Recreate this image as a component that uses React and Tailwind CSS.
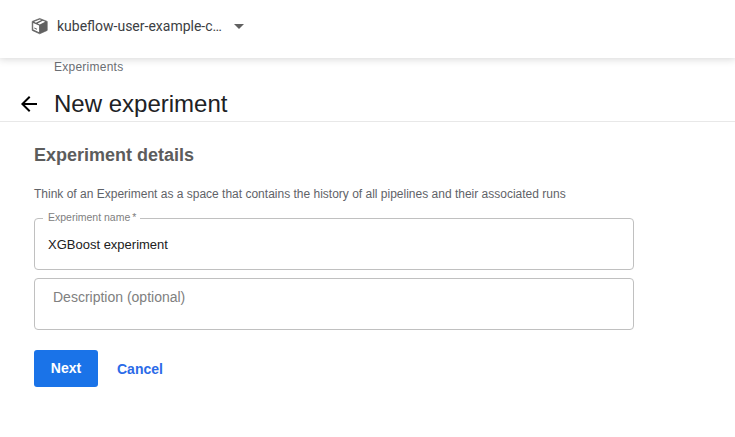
export default function App() {
  return (
    <div className="h-[437px] w-[735px] overflow-hidden bg-white font-['Liberation_Sans',Arial,sans-serif]">
      <header className="relative flex h-[58px] items-start bg-white pl-[30px] pt-[16px] shadow-[0_0_8px_1px_rgba(0,0,0,0.17)]">
        <svg className="h-5 w-5" viewBox="0 0 20 20">
          <path d="M9.7 2.5 L17.2 5.4 V14.4 L9.7 17.8 L2.2 14.4 V5.4 Z" fill="#616161" stroke="#616161" strokeWidth="0.7" strokeLinejoin="round" />
          <path d="M3.2 7 L9.1 9.6 V16.2 L3.2 13.6 Z" fill="#fff" />
          <path d="M4.3 11.5 L7 12.7 V13.8 L4.3 12.6 Z" fill="#616161" />
          <path d="M9.7 3.5 L11.3 4.1 L5.9 6.7 L4.1 5.8 Z M12.8 4.7 L15.2 5.7 L9.8 8.4 L7.5 7.4 Z" fill="#fff" />
        </svg>
        <span className="ml-[7px] w-[165px] overflow-hidden whitespace-nowrap font-[Roboto,sans-serif] text-sm leading-5 text-[#3c4043]">kubeflow-user-example-c…</span>
        <svg className="ml-3 mt-[8px] h-[5px] w-[10px]" viewBox="0 0 10 5" fill="#616161"><path d="M0 0h10L5 5z" /></svg>
      </header>
      <div className="h-[64px] border-b border-[#e8e8e8]">
        <div className="pl-[54px] pt-[2px] text-xs leading-[14px] tracking-[0.25px] text-[#6b6f74]">Experiments</div>
        <div className="mt-[15px] flex h-[30px] items-center pl-[17px]">
          <svg className="h-6 w-6" viewBox="0 0 24 24" fill="#000"><path d="M20 11H7.83l5.59-5.59L12 4l-8 8 8 8 1.41-1.41L7.83 13H20v-2z" /></svg>
          <h1 className="ml-[13px] text-2xl leading-[30px] text-[#202124]">New experiment</h1>
        </div>
      </div>
      <main className="w-[634px] pl-[34px] pt-[22px]">
        <h2 className="text-lg font-bold leading-[22px] text-[#5c5c5c]">Experiment details</h2>
        <p className="mt-[20px] whitespace-nowrap text-xs leading-4 text-[#5f6368]">Think of an Experiment as a space that contains the history of all pipelines and their associated runs</p>
        <fieldset className="mt-[8px] h-[60px] rounded border border-[#c0c0c0] pl-[8px]">
          <legend className="flex h-4 w-[97px] pl-[5px] text-[10.5px] leading-[14px] text-[#808080]">Experiment name<span className="ml-[2px]">*</span></legend>
          <div className="pl-[5px] pt-[11px] text-[13px] leading-4 text-[#212121]">XGBoost experiment</div>
        </fieldset>
        <div className="mt-2 h-[52px] rounded border border-[#c0c0c0] pl-[18px] pt-[10px] text-sm leading-4 text-[#808080]">Description (optional)</div>
        <div className="mt-5 flex">
          <button className="h-[37px] w-[64px] rounded-[3px] bg-[#1a73e8] pb-[2px] text-sm font-bold text-white">Next</button>
          <button className="ml-[19px] h-[37px] text-sm font-bold text-[#2b6be8]">Cancel</button>
        </div>
      </main>
    </div>
  );
}
